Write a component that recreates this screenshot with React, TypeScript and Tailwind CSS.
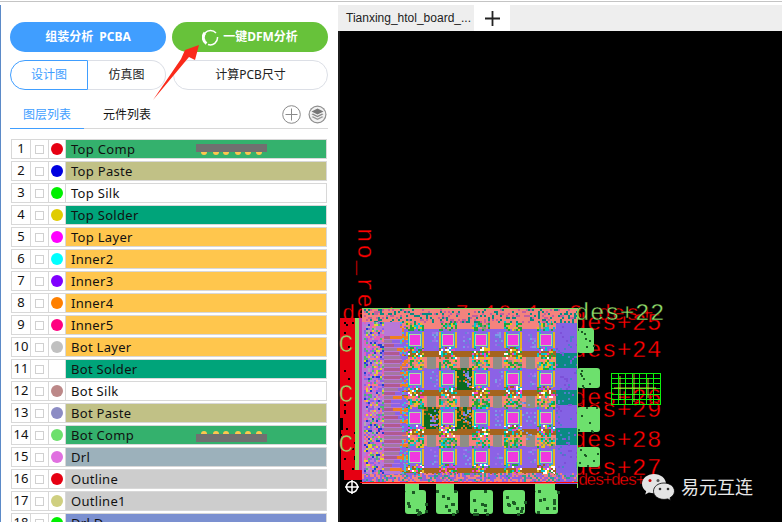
import { useMemo } from "react";

const layers = [
  { name: "Top Comp", fill: "bg-[#34b16d]", dot: "bg-[#e60012]", part: "top" },
  { name: "Top Paste", fill: "bg-[#c1c186]", dot: "bg-[#0000e0]" },
  { name: "Top Silk", fill: "bg-white", dot: "bg-[#00f000]" },
  { name: "Top Solder", fill: "bg-[#00a47a]", dot: "bg-[#e0cc00]" },
  { name: "Top Layer", fill: "bg-[#ffc64d]", dot: "bg-[#ff00ff]" },
  { name: "Inner2", fill: "bg-[#ffc64d]", dot: "bg-[#00ffff]" },
  { name: "Inner3", fill: "bg-[#ffc64d]", dot: "bg-[#8000ff]" },
  { name: "Inner4", fill: "bg-[#ffc64d]", dot: "bg-[#ff8000]" },
  { name: "Inner5", fill: "bg-[#ffc64d]", dot: "bg-[#ff0080]" },
  { name: "Bot Layer", fill: "bg-[#ffc64d]", dot: "bg-[#c0c0c0]" },
  { name: "Bot Solder", fill: "bg-[#00a47a]", dot: "bg-white" },
  { name: "Bot Silk", fill: "bg-white", dot: "bg-[#bc8888]" },
  { name: "Bot Paste", fill: "bg-[#c1c186]", dot: "bg-[#8c8cc4]" },
  { name: "Bot Comp", fill: "bg-[#34b16d]", dot: "bg-[#6de06d]", part: "bot" },
  { name: "Drl", fill: "bg-[#9cb1bb]", dot: "bg-[#e070e0]" },
  { name: "Outline", fill: "bg-[#cdcdcd]", dot: "bg-[#e60012]" },
  { name: "Outline1", fill: "bg-[#cdcdcd]", dot: "bg-[#cfcf80]" },
  { name: "Drl D", fill: "bg-[#7b90d0]", dot: "bg-[#00f000]" },
];

const PartGlyph = ({ flip }: { flip: boolean }) => (
  <svg width="71" height="12" viewBox="0 0 71 12" className="absolute left-[130px] top-[4px]">
    <g transform={flip ? "matrix(1 0 0 -1 0 12)" : undefined}>
      {[8, 20, 30, 42, 52, 63].map((x) => (
        <circle key={x} cx={x} cy="8" r="3" fill="#ffc64d" />
      ))}
      <rect x="0" y="0" width="71" height="8" fill="#707070" />
    </g>
  </svg>
);

const LayerRow = ({ index, layer }: { index: number; layer: (typeof layers)[number] }) => (
  <div className="mb-[2px] flex h-5 shrink-0 border border-[#d8d8d8] bg-white">
    <div className="flex w-[19px] shrink-0 items-center justify-center border-r border-[#d8d8d8] text-[13px] text-[#111]">
      {index}
    </div>
    <div className="flex w-[18px] shrink-0 items-center justify-center border-r border-[#d8d8d8]">
      <span className="h-[9px] w-[9px] border border-[#d0d0d0]" />
    </div>
    <div className="flex w-[17px] shrink-0 items-center justify-center border-r border-[#d8d8d8]">
      <span className={`h-3 w-3 rounded-full ${layer.dot}`} />
    </div>
    <div className={`relative flex-1 pl-[5px] text-[13px] leading-[18px] tracking-[0.3px] text-[#111] ${layer.fill}`}>
      {layer.name}
      {layer.part && <PartGlyph flip={layer.part === "bot"} />}
    </div>
  </div>
);

const mulberry = (seed: number) => () => {
  seed = (seed + 0x6d2b79f5) | 0;
  let t = Math.imul(seed ^ (seed >>> 15), 1 | seed);
  t = (t + Math.imul(t ^ (t >>> 7), 61 | t)) ^ t;
  return ((t ^ (t >>> 14)) >>> 0) / 4294967296;
};

type Box = [number, number, number, number, string];

const buildBoard = () => {
  const rnd = mulberry(42);
  const pick = (list: string[]) => list[Math.floor(rnd() * list.length)];
  const out: Box[] = [];
  const noise = (x: number, y: number, w: number, h: number, list: string[], density = 1, size = 2) => {
    for (let yy = y; yy < y + h; yy += size)
      for (let xx = x; xx < x + w; xx += size)
        if (rnd() < density) out.push([xx, yy, size, size, pick(list)]);
  };

  // left copper strip
  out.push([340, 318, 16, 100, "#e60012"]);
  out.push([343, 418, 13, 12, "#e60012"]);
  out.push([341, 430, 15, 40, "#e60012"]);
  noise(340, 318, 16, 152, ["#000"], 0.035);
  out.push([355, 318, 4, 160, "#8fdc6a"]);
  out.push([359, 318, 4, 160, "#c040b0"]);
  out.push([344, 470, 22, 10, "#e60012"]);

  // board base
  out.push([362, 308, 216, 176, "#f4837d"]);
  const cols = [415, 448, 481, 513, 546];
  const rows = [340, 379, 418, 457];
  rows.forEach((cy) => {
    cols.forEach((cx) => {
      out.push([cx - 18, cy - 11, 34, 22, "#8c62e6"]);
      out.push([cx - 18, cy + 11, 34, 6, "#a5641e"]);
    });
  });
  // gray blocks in the salmon bands
  [431, 464, 497, 530].forEach((x) =>
    [360, 399, 438].forEach((y) => {
      out.push([x - 4, y - 3, 9, 12, "#8e8e86"]);
    }),
  );
  // dark green pads between tiles
  [[463, 379], [463, 418], [430, 418]].forEach(([x, y]) => {
    out.push([x - 8, y - 11, 17, 22, "#0c6a20"]);
    noise(x - 8, y - 11, 17, 22, ["#e07a18", "#a5641e"], 0.3);
  });
  noise(512, 400, 20, 40, ["#7c9ce8", "#6a80d8"], 0.2);
  rows.forEach((cy) => {
    cols.forEach((cx) => {
      noise(cx - 9, cy - 19, 18, 9, ["#1fa83c", "#1fa83c", "#e8c020", "#00c8d0", "#8e8e86"], 0.7);
      noise(cx - 9, cy + 7, 18, 11, ["#00c8d0", "#e8c020", "#f040d0", "#ffffff", "#a06020", "#1fa83c"], 0.65);
      out.push([cx - 9, cy - 8, 2, 16, "#e8b020"]);
      out.push([cx - 7, cy - 8, 2, 16, "#00c8d0"]);
      out.push([cx + 7, cy - 8, 2, 16, "#e8b020"]);
      out.push([cx + 5, cy - 8, 2, 16, "#40a0e0"]);
      out.push([cx - 6, cy - 6, 12, 12, "#a8e0a0"]);
      out.push([cx - 5, cy - 5, 10, 10, "#f038e0"]);
      noise(cx - 18, cy - 8, 8, 16, ["#7c9ce8", "#9c70e8", "#6a80d8"], 0.4);
    });
  });

  // right band
  out.push([556, 322, 21, 162, "#8462e4"]);
  [[353, 15], [390, 15], [428, 17]].forEach(([y, h]) => out.push([556, y, 21, h, "#0a8a84"]));
  noise(556, 322, 21, 162, ["#4a80c8", "#7c50d8"], 0.1);

  // top and bottom bands
  noise(362, 309, 216, 14, ["#0a8a84", "#f4837d", "#f4837d", "#f4837d", "#c060a0"], 0.85);
  noise(362, 473, 216, 10, ["#8c62e6", "#e8808c", "#30a090", "#b060c0", "#f4837d", "#8c62e6"], 0.85);

  // fan-out region
  out.push([362, 322, 40, 152, "#b878d8"]);
  noise(364, 322, 20, 152, ["#e060c0", "#8c62e6", "#8c62e6", "#e8d030", "#2040d0", "#b0a8b0", "#50b870", "#f4837d", "#e060c0"], 0.75);
  for (let y = 336; y < 470; y += 4) {
    const k = Math.abs(((y - 336) % 66) - 33) / 33;
    const w = 6 + (1 - k) * 18;
    out.push([384, y, w, 3, y % 8 === 0 ? "#b05a90" : "#a478a0"]);
    out.push([384 + w, y, Math.max(24 - w, 1), 3, y % 12 === 0 ? "#f08020" : "#8c62e6"]);
  }
  noise(400, 322, 6, 152, ["#40c0d0", "#f08020", "#8c62e6"], 0.5);
  return out;
};

const sidePads = [
  [577, 328, 17, 25],
  [577, 368, 23, 20],
  [577, 407, 23, 25],
  [577, 447, 23, 20],
];
const bottomPads = [
  [405, 490, 21, 24],
  [436, 490, 22, 24],
  [470, 490, 23, 24],
  [503, 490, 22, 24],
  [535, 490, 23, 24],
];

const PcbCanvas = () => {
  const boxes = useMemo(buildBoard, []);
  const speckle = useMemo(() => {
    const rnd = mulberry(7);
    const out: [number, number, number][] = [];
    [...sidePads, ...bottomPads].forEach(([x, y, w, h]) => {
      const dense = y === 490 ? 10 : 7;
      for (let i = 0; i < dense; i++) {
        const s = y === 490 ? 3 : 2;
        out.push([x + Math.floor(rnd() * w), y + Math.floor(rnd() * h), s]);
      }
    });
    return out;
  }, []);
  const red = "#ff0000";
  const gridX = Array.from({ length: 8 }, (_, i) => 611 + i * 7);
  const gridY = Array.from({ length: 7 }, (_, i) => 373 + i * 5.3);
  return (
    <svg width="444" height="491" viewBox="338 31 444 491" className="block" fontFamily="'Liberation Mono', monospace">
      <rect x="338" y="31" width="2" height="491" fill="#1c1c1c" />
      <g fill={red} stroke="#000" strokeWidth="0.35" fontSize="24">
        <text transform="translate(358 228) rotate(90)" letterSpacing="2">no_re</text>
        <text x="342" y="320" fontSize="22" letterSpacing="1">des+des+7 10 1c 3 des+</text>
        <text x="572" y="330" letterSpacing="0.6">des+25</text>
        <text x="572" y="357" letterSpacing="0.6">des+24</text>
        <text x="572" y="405" letterSpacing="0.6">des+26</text>
        <text x="572" y="417" letterSpacing="0.6">des+29</text>
        <text x="572" y="447" letterSpacing="0.6">des+28</text>
        <text x="572" y="475" letterSpacing="0.6">des+27</text>
        <text x="578" y="485" fontSize="17" letterSpacing="-2">des+des+</text>
      </g>
      <text x="575" y="320" fill="#8fdc6a" stroke="#000" strokeWidth="0.35" fontSize="24" letterSpacing="0.6">des+22</text>
      <g shapeRendering="crispEdges">
        {boxes.map((b, i) => (
          <rect key={i} x={b[0]} y={b[1]} width={b[2]} height={b[3]} fill={b[4]} />
        ))}
      </g>
      <g fill="#6de06d">
        {[...sidePads, ...bottomPads].map(([x, y, w, h]) => (
          <rect key={x + "-" + y} x={x} y={y} width={w} height={h} rx="3" />
        ))}
        <rect x="405" y="484" width="14" height="7" />
        <rect x="436" y="484" width="18" height="7" />
        <rect x="535" y="484" width="20" height="7" />
      </g>
      <g shapeRendering="crispEdges" fill="#1c5a24">
        {speckle.map(([x, y, s], i) => (
          <rect key={i} x={x} y={y} width={s} height={s} />
        ))}
      </g>
      <path d="M362 308.500H577.500V488" fill="none" stroke="#7be05a" strokeWidth="1" />
      <path d="M360 482.500H578" fill="none" stroke={red} strokeWidth="1" />
      <g fill="#8fdc6a" stroke="#e60012" strokeWidth="0.6" fontSize="25" textAnchor="middle">
        <text x="346" y="352">C</text>
        <text x="346" y="402">C</text>
        <text x="346" y="452">C</text>
      </g>
      <g stroke="#0cf00c" strokeWidth="1" shapeRendering="crispEdges">
        {gridX.map((x) => <line key={x} x1={x} y1="373" x2={x} y2="405" />)}
        {gridY.map((y) => <line key={y} x1="611" y1={y} x2="660" y2={y} />)}
      </g>
      <g stroke="#e8e040" strokeWidth="1" fill="none" opacity="0.8">
        <path d="M620 376v24M634 374v28M648 378v20M614 388h42" />
      </g>
      <g stroke="#fff" fill="none" strokeWidth="1.500">
        <circle cx="352" cy="487" r="5.500" />
        <path d="M345 487h14M352 480v14" />
      </g>
      {/* wechat mark */}
      <path d="M654 474c-6.600 0-12 4.300-12 9.800 0 3 1.600 5.600 4.200 7.400l-1 3.300 3.700-2c1.600.5 3.300.8 5.100.8 6.600 0 12-4.300 12-9.600s-5.400-9.700-12-9.700z" fill="#e4e4e4" />
      <path d="M664 483c-6 0-10.500 3.600-10.500 8.200s4.500 8.200 10.500 8.200c1.300 0 2.600-.2 3.800-.5l3 1.700-.8-2.800c2.700-1.500 4.500-3.900 4.500-6.600 0-4.600-4.500-8.200-10.500-8.200z" fill="#e4e4e4" stroke="#000" strokeWidth="0.800" />
      <circle cx="650" cy="480.500" r="1.500" fill="#c00" />
      <circle cx="658" cy="480.500" r="1.500" fill="#555" />
      <circle cx="660" cy="489" r="1.300" fill="#333" />
      <circle cx="668" cy="489" r="1.300" fill="#333" />
      <text x="681" y="494" fill="#e8e8e8" fontSize="18" fontFamily="'Noto Sans CJK SC', sans-serif">易元互连</text>
    </svg>
  );
};

const App = () => {
  return (
    <div className="flex h-[522px] w-[782px] flex-col overflow-hidden bg-white font-['Noto_Sans','Noto_Sans_CJK_SC',sans-serif]">
      <div className="mt-px h-[4px] shrink-0 border-t border-[#c4c4c4]" />
      <div className="flex min-h-0 flex-1">
        <div className="relative w-[338px] shrink-0 overflow-hidden border-l border-[#5b8ac8] pl-[9px] pt-[17px]">
          <div className="flex w-[318px] justify-between">
            <button className="flex h-[30px] w-[156px] items-center justify-center rounded-full bg-[#409eff] text-[12px] font-bold text-white [word-spacing:3px]">
              组装分析 PCBA
            </button>
            <button className="flex h-[30px] w-[156px] items-center justify-center gap-[4px] rounded-full bg-[#67c23a] text-[12px] font-bold text-white">
              <svg width="17" height="17" viewBox="0 0 17 17" fill="none" stroke="#fff">
                <path d="M4.500 14.500A7.200 7.200 0 0 1 3 3.800" strokeWidth="3" />
                <path d="M3 4A7.200 7.200 0 0 1 14 4" strokeWidth="1.500" />
                <path d="M15.500 8A7.200 7.200 0 0 1 6 15.500" strokeWidth="1.500" />
              </svg>
              一键DFM分析
            </button>
          </div>
          <div className="mt-2 flex w-[318px] justify-between text-[12px] text-[#222]">
            <div className="flex w-[156px]">
              <div className="flex h-[30px] w-[78px] items-center justify-center rounded-l-full border border-[#409eff] text-[#409eff]">
                设计图
              </div>
              <div className="flex h-[30px] w-[78px] items-center justify-center rounded-r-full border border-l-0 border-[#dcdfe6]">
                仿真图
              </div>
            </div>
            <div className="flex h-[30px] w-[155px] items-center justify-center rounded-full border border-[#dcdfe6]">
              计算PCB尺寸
            </div>
          </div>
          <div className="mt-[9px] flex h-[30px] w-[318px] items-center border-b border-[#d8d8d8] pt-[2px] text-[12px]">
            <div className="-mb-px flex h-[28px] w-[74px] items-center justify-center border-b border-[#409eff] text-[#409eff]">
              图层列表
            </div>
            <div className="ml-[19px] text-[#111]">元件列表</div>
            <div className="ml-auto flex items-center gap-[7px] pr-px">
              <svg width="19" height="19" viewBox="0 0 19 19" fill="none" stroke="#8a8a8a">
                <circle cx="9.500" cy="9.500" r="8.800" />
                <path d="M9.500 3.500v12M3.500 9.500h12" />
              </svg>
              <svg width="19" height="19" viewBox="0 0 19 19">
                <circle cx="9.500" cy="9.500" r="9" fill="#8f8f8f" />
                <circle cx="9.500" cy="9.500" r="7.800" fill="#f2f2f2" />
                <path d="M9.500 3.500l6 3-6 3-6-3z" fill="#777" />
                <path d="M5 8.500l4.500 2.300 4.500-2.300 1.500.8-6 3-6-3z" fill="#888" />
                <path d="M5 11.200l4.500 2.300 4.500-2.300 1.500.8-6 3-6-3z" fill="#999" />
              </svg>
            </div>
          </div>
          <div className="ml-px mt-[10px] flex w-[316px] flex-col">
            {layers.map((layer, i) => (
              <LayerRow key={layer.name} index={i + 1} layer={layer} />
            ))}
          </div>
          <svg width="70" height="80" viewBox="0 0 70 80" className="absolute left-[144px] top-[29px]">
            <path d="M8 66L36 25 40 16 54 11 50 26 44 23z" fill="#fa2a1a" />
          </svg>
        </div>
        <div className="flex min-w-0 flex-1 flex-col">
          <div className="flex h-[26px] shrink-0 bg-[#eeeeee] font-['Liberation_Sans',sans-serif] text-[12px] text-[#222]">
            <div className="flex w-[136px] items-center pl-[8px]">Tianxing_htol_board_...</div>
            <div className="flex w-[36px] items-center justify-center bg-white">
              <svg width="17" height="17" viewBox="0 0 17 17" stroke="#222" strokeWidth="1.800">
                <path d="M8.500 1v15M1 8.500h15" />
              </svg>
            </div>
          </div>
          <div className="min-h-0 flex-1 bg-black">
            <PcbCanvas />
          </div>
        </div>
      </div>
    </div>
  );
};

export default App;
